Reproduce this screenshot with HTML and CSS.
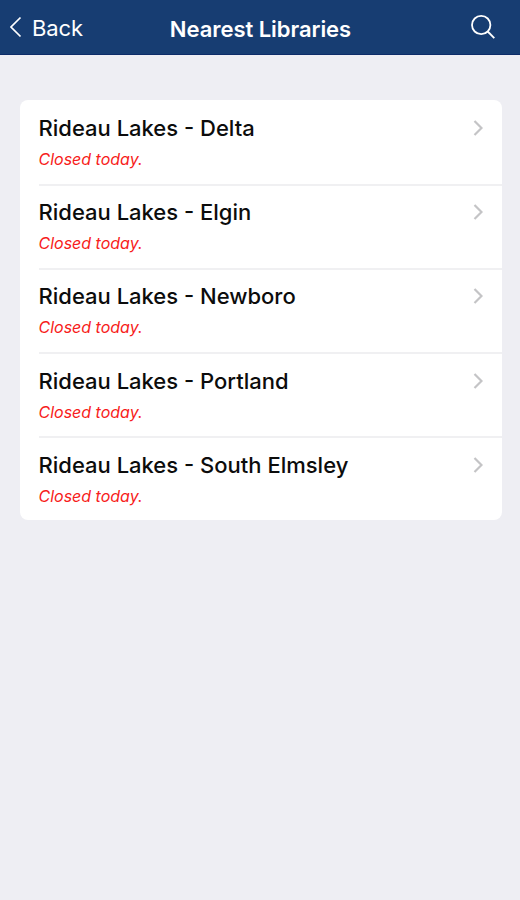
FILE: index.html
```html
<!DOCTYPE html>
<html lang="en">
<head>
    <meta charset="UTF-8">
    <meta name="viewport" content="width=device-width, initial-scale=1.0">
    <title>Nearest Libraries</title>
    <link rel="stylesheet" href="styles.css">
</head>
<body>
    <header class="navbar">
        <a href="#" class="back">
            <svg class="back-icon" viewBox="0 0 12 22"><path d="M10.5 1.5 L1 11 L10.5 20.5"/></svg>
            <span>Back</span>
        </a>
        <h1>Nearest Libraries</h1>
        <a href="#" class="search" aria-label="Search">
            <svg viewBox="0 0 26 26"><circle cx="11.2" cy="11" r="9.2"/><path d="M17.7 17.5 L24.3 24.2"/></svg>
        </a>
    </header>

    <main class="library-list">
        <a href="#" class="library">
            <div class="library-info">
                <h2>Rideau Lakes - Delta</h2>
                <p>Closed today.</p>
            </div>
            <svg class="chevron" viewBox="0 0 10 16"><path d="M1.5 1 L8.5 8 L1.5 15"/></svg>
        </a>
        <a href="#" class="library">
            <div class="library-info">
                <h2>Rideau Lakes - Elgin</h2>
                <p>Closed today.</p>
            </div>
            <svg class="chevron" viewBox="0 0 10 16"><path d="M1.5 1 L8.5 8 L1.5 15"/></svg>
        </a>
        <a href="#" class="library">
            <div class="library-info">
                <h2>Rideau Lakes - Newboro</h2>
                <p>Closed today.</p>
            </div>
            <svg class="chevron" viewBox="0 0 10 16"><path d="M1.5 1 L8.5 8 L1.5 15"/></svg>
        </a>
        <a href="#" class="library">
            <div class="library-info">
                <h2>Rideau Lakes - Portland</h2>
                <p>Closed today.</p>
            </div>
            <svg class="chevron" viewBox="0 0 10 16"><path d="M1.5 1 L8.5 8 L1.5 15"/></svg>
        </a>
        <a href="#" class="library">
            <div class="library-info">
                <h2>Rideau Lakes - South Elmsley</h2>
                <p>Closed today.</p>
            </div>
            <svg class="chevron" viewBox="0 0 10 16"><path d="M1.5 1 L8.5 8 L1.5 15"/></svg>
        </a>
    </main>
</body>
</html>
```
FILE: styles.css
```css
* {
    margin: 0;
    padding: 0;
    box-sizing: border-box;
}

body {
    font-family: Inter, 'Liberation Sans', sans-serif;
    background: #eeeef3;
    min-height: 100vh;
}

a {
    color: inherit;
    text-decoration: none;
}

svg {
    display: block;
    fill: none;
    stroke: currentColor;
}

.navbar {
    display: grid;
    grid-template-columns: 1fr auto 1fr;
    align-items: center;
    height: 55px;
    padding: 0 9px 0 10px;
    background: #173d72;
    border-bottom: 1px solid #0d2c68;
    color: white;
}

.navbar h1 {
    font-size: 22px;
    font-weight: 600;
    line-height: 28px;
    padding-top: 3px;
    letter-spacing: -0.05px;
}

.back {
    display: flex;
    align-items: center;
    gap: 10px;
    font-size: 22px;
    line-height: 28px;
    letter-spacing: -0.1px;
}

.back span {
    padding-top: 2px;
}

.back-icon {
    width: 12px;
    height: 22px;
    stroke-width: 1.7;
}

.search {
    justify-self: end;
    margin-right: 15px;
}

.search svg {
    width: 26px;
    height: 26px;
    stroke-width: 1.8;
}

.library-list {
    margin: 44.5px 18px 0 19.5px;
    background: white;
    border-radius: 8px;
    overflow: hidden;
}

.library {
    display: flex;
    justify-content: space-between;
    margin-left: 19px;
    padding: 14.5px 19.5px 0 0;
    height: 84.2px;
}

/* separator starts at the text, not at the card edge */
.library + .library {
    border-top: 2px solid #f0f0f2;
    padding-top: 12.5px;
}

.library h2 {
    color: #0c0c0c;
    font-size: 22px;
    font-weight: 500;
    line-height: 28px;
}

.library p {
    color: #f71c20;
    font-size: 16px;
    font-style: italic;
    line-height: 20px;
    margin-top: 7px;
}

.chevron {
    width: 10px;
    height: 16px;
    margin-top: 6px;
    color: #c4c4c6;
    stroke-width: 2.2;
}
```
